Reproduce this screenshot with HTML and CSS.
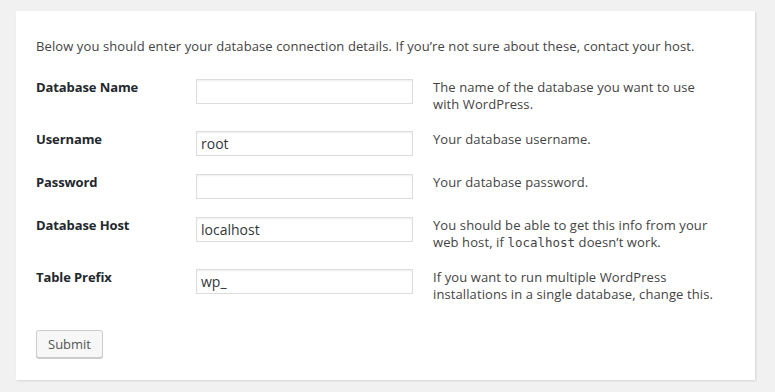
FILE: index.html
```html
<!DOCTYPE html>
<html>
<head>
<meta charset="utf-8">
<link rel="stylesheet" href="styles.css">
</head>
<body>
<form class="panel">
  <p class="intro">Below you should enter your database connection details. If you’re not sure about these, contact your host.</p>
  <table class="form-table">
    <tr>
      <th>Database Name</th>
      <td class="field"><input class="text" type="text" value=""></td>
      <td class="desc">The name of the database you want to use with WordPress.</td>
    </tr>
    <tr>
      <th>Username</th>
      <td class="field"><input class="text" type="text" value="root"></td>
      <td class="desc">Your database username.</td>
    </tr>
    <tr>
      <th>Password</th>
      <td class="field"><input class="text" type="text" value=""></td>
      <td class="desc">Your database password.</td>
    </tr>
    <tr>
      <th>Database Host</th>
      <td class="field"><input class="text" type="text" value="localhost"></td>
      <td class="desc">You should be able to get this info from your web host, if <code>localhost</code> doesn’t work.</td>
    </tr>
    <tr>
      <th>Table Prefix</th>
      <td class="field"><input class="text" type="text" value="wp_"></td>
      <td class="desc">If you want to run multiple WordPress installations in a single database, change this.</td>
    </tr>
  </table>
  <div class="actions"><button class="button" type="button">Submit</button></div>
</form>
</body>
</html>
```
FILE: styles.css
```css
html, body {
  margin: 0;
  padding: 0;
  background: #f1f1f1;
}
body {
  padding: 11px 20px 12px 16px;
  font-family: "Open Sans", "Noto Sans", sans-serif;
  font-size: 13px;
  color: #444;
}
.panel {
  display: block;
  background: #fff;
  width: 699px;
  padding: 26px 20px 22px 20px;
  box-shadow: 1px 1px 2px rgba(0,0,0,0.12);
}
.intro {
  margin: 0 0 15px 0;
  line-height: 18px;
  font-size: 13px;
  color: #444;
  letter-spacing: 0.1px;
}
.form-table {
  border-collapse: collapse;
  border-spacing: 0;
  table-layout: fixed;
  width: 699px;
}
.form-table th {
  width: 140px;
  padding: 9px 20px 9px 0;
  text-align: left;
  vertical-align: top;
  font-weight: 700;
  font-size: 13px;
  line-height: 17px;
  color: #23282d;
  letter-spacing: -0.1px;
}
.form-table td {
  vertical-align: top;
  padding: 9px 20px 9px 0;
}
.form-table td.field {
  width: 217px;
}
.text {
  box-sizing: border-box;
  display: block;
  width: 217px;
  height: 25px;
  margin: 0;
  padding: 0 4px;
  border: 1px solid #ddd;
  box-shadow: inset 0 1px 2px rgba(0,0,0,0.07);
  font-family: "Open Sans", "Noto Sans", sans-serif;
  font-size: 14px;
  color: #32373c;
  background: #fff;
  outline: none;
}
.form-table td.desc {
  width: 282px;
  font-size: 13px;
  line-height: 17px;
  color: #444;
  letter-spacing: 0.1px;
}
code {
  font-family: "DejaVu Sans Mono", "Liberation Mono", monospace;
  font-size: 12.5px;
  letter-spacing: 0;
  color: #444;
}
.actions {
  margin-top: 18px;
}
.button {
  box-sizing: border-box;
  height: 28px;
  padding: 0 11px;
  border: 1px solid #ccc;
  border-radius: 3px;
  background: #f7f7f7;
  box-shadow: 0 1px 0 #ccc;
  font-family: "Open Sans", "Noto Sans", sans-serif;
  font-size: 13px;
  color: #555;
  cursor: pointer;
}
```
